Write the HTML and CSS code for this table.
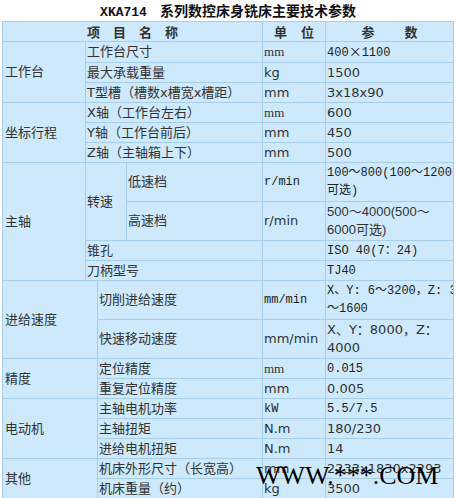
FILE: index.html
```html
<!DOCTYPE html>
<html lang="zh-CN">
<head>
<meta charset="utf-8">
<title>XKA714 系列数控床身铣床主要技术参数</title>
<link rel="stylesheet" href="styles.css">
</head>
<body>
<div class="title"><span class="model">XKA714</span>系列数控床身铣床主要技术参数</div>
<table class="spec">
  <colgroup><col class="c1"><col class="c2a"><col class="c2b"><col class="cu"><col class="cv"></colgroup>
  <tr class="head"><th colspan="3" class="h1">项 目 名 称</th><th class="h2">单 位</th><th class="h3">参 数</th></tr>
  <tr><td rowspan="3" class="grp">工作台</td><td colspan="2">工作台尺寸</td><td class="serif">mm</td><td class="mono">400<span class="cjk">×</span>1100</td></tr>
  <tr><td colspan="2">最大承载重量</td><td>kg</td><td>1500</td></tr>
  <tr><td colspan="2">T型槽（槽数x槽宽x槽距）</td><td>mm</td><td>3x18x90</td></tr>
  <tr><td rowspan="3" class="grp">坐标行程</td><td colspan="2">X轴（工作台左右）</td><td class="serif">mm</td><td>600</td></tr>
  <tr><td colspan="2">Y轴（工作台前后）</td><td>mm</td><td>450</td></tr>
  <tr><td colspan="2">Z轴（主轴箱上下）</td><td>mm</td><td>500</td></tr>
  <tr class="tall"><td rowspan="4" class="grp">主轴</td><td rowspan="2">转速</td><td>低速档</td><td class="mono">r/min</td><td class="mono">100～800(100～1200<br>可选)</td></tr>
  <tr class="tall"><td>高速档</td><td>r/min</td><td class="arial">500～4000(500～<br>6000可选)</td></tr>
  <tr><td colspan="2">锥孔</td><td></td><td class="mono">ISO 40(7：24)</td></tr>
  <tr><td colspan="2">刀柄型号</td><td></td><td class="mono">TJ40</td></tr>
</table>
<table class="spec lower">
  <colgroup><col class="d1"><col class="d2"><col class="cu"><col class="cv"></colgroup>
  <tr class="tall"><td rowspan="2" class="grp">进给速度</td><td>切削进给速度</td><td class="mono">mm/min</td><td class="mono">X、Y: 6～3200，Z: 3<br>～1600</td></tr>
  <tr class="tall"><td>快速移动速度</td><td>mm/min</td><td>X、Y：8000，Z：<br>4000</td></tr>
  <tr><td rowspan="2" class="grp">精度</td><td>定位精度</td><td class="serif">mm</td><td class="mono">0.015</td></tr>
  <tr><td>重复定位精度</td><td>mm</td><td>0.005</td></tr>
  <tr><td rowspan="3" class="grp">电动机</td><td>主轴电机功率</td><td class="mono">kW</td><td class="mono">5.5/7.5</td></tr>
  <tr><td>主轴扭矩</td><td>N.m</td><td>180/230</td></tr>
  <tr><td>进给电机扭矩</td><td>N.m</td><td>14</td></tr>
  <tr><td rowspan="2" class="grp">其他</td><td>机床外形尺寸（长宽高）</td><td>mm</td><td>2233x1830x2293</td></tr>
  <tr><td>机床重量（约）</td><td>kg</td><td>3500</td></tr>
</table>
<div class="wm">WWW.***.COM</div>
</body>
</html>
```
FILE: styles.css
```css
html, body {
  margin: 0;
  padding: 0;
  background: #ffffff;
}
body {
  position: relative;
  width: 456px;
}
.title {
  height: 21px;
  line-height: 21px;
  text-align: center;
  font-family: "Noto Sans CJK SC", sans-serif;
  font-size: 14px;
  font-weight: bold;
  color: #111;
}
.title .model {
  font-family: "Liberation Mono", monospace;
  font-size: 13px;
  font-weight: bold;
  margin-right: 13px;
}
.spec {
  margin-left: 2px;
  width: 451px;
  border-collapse: collapse;
  table-layout: fixed;
  background: #cde9fb;
  color: #333;
  font-family: "DejaVu Sans", "Noto Sans CJK SC", sans-serif;
  font-size: 13px;
  line-height: 18px;
}
.spec.lower {
  margin-top: -1px;
}
.spec td, .spec th {
  border: 1px solid #a6cdea;
  padding: 0 1px;
  vertical-align: middle;
  text-align: left;
  white-space: nowrap;
  overflow: hidden;
}
.spec tr { height: 20px; }
.spec tr.tall { height: 39px; }
.spec .grp { padding-left: 2px; }
.c1 { width: 83px; }
.c2a { width: 41px; }
.c2b { width: 136px; }
.cu { width: 63px; }
.cv { width: 128px; }
.d1 { width: 95px; }
.d2 { width: 165px; }
.spec th {
  font-family: "Noto Sans CJK SC", sans-serif;
  font-weight: bold;
  text-align: center;
  color: #333;
}
.h1 { word-spacing: 10px; }
.h2 { word-spacing: 11px; }
.h3 { word-spacing: 27px; }
.serif {
  font-family: "Liberation Serif", "Noto Sans CJK SC", serif;
}
.mono {
  font-family: "Liberation Mono", "Noto Sans CJK SC", monospace;
  font-size: 12px;
  color: #222;
}
.arial {
  font-family: "Liberation Sans", "Noto Sans CJK SC", sans-serif;
}
.cjk {
  font-family: "Noto Sans CJK SC", sans-serif;
  font-size: 13px;
}
.wm {
  position: absolute;
  left: 256px;
  top: 463px;
  font-family: "Liberation Serif", serif;
  font-size: 26px;
  line-height: 26px;
  color: #000;
  white-space: nowrap;
}
```
